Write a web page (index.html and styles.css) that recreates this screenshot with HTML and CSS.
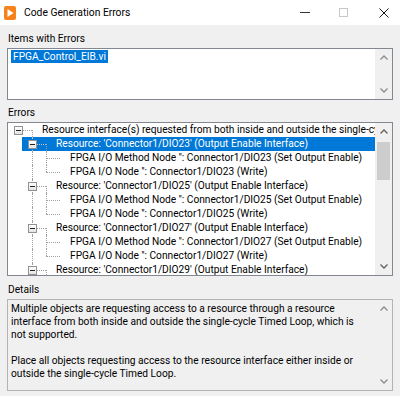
FILE: index.html
```html
<!DOCTYPE html>
<html>
  <head>
    <title>Code Generation Errors</title>
    <meta charset="UTF-8">
    <link rel="stylesheet" href="styles.css">
  </head>
  <body>
    <div class="window">
      <div class="titlebar">
        <svg class="app-icon" width="12" height="14" viewBox="0 0 12 14">
          <rect x="0" y="0" width="12" height="14" rx="2" fill="#f7821b"/>
          <path d="M3.5 3 L9.5 7 L3.5 11 Z" fill="#fff"/>
        </svg>
        <span class="title">Code Generation Errors</span>
        <div class="controls">
          <span class="ctl ctl-min"><i></i></span>
          <span class="ctl ctl-max"><i></i></span>
          <span class="ctl ctl-close">
            <svg width="10" height="10" viewBox="0 0 10 10"><path d="M0.5 0.5 L9.5 9.5 M9.5 0.5 L0.5 9.5" stroke="#1a1a1a" stroke-width="1"/></svg>
          </span>
        </div>
      </div>

      <div class="content">
        <div class="label label-first">Items with Errors</div>
        <div class="box list-box">
          <div class="list-items">
            <span class="item selected">FPGA_Control_EIB.vi</span>
          </div>
          <div class="scrollbar light">
            <span class="arrow"><svg width="8" height="5" viewBox="0 0 8 5"><path d="M0.5 4.5 L4 1 L7.5 4.5" /></svg></span>
            <span class="track"></span>
            <span class="arrow"><svg width="8" height="5" viewBox="0 0 8 5"><path d="M0.5 0.5 L4 4 L7.5 0.5" /></svg></span>
          </div>
        </div>

        <div class="label">Errors</div>
        <div class="box tree-box">
          <div class="tree">
            <div class="row">
              <div class="body">
                <span class="node root"><i class="exp"></i><b class="drop"></b></span>
                <span class="text">Resource interface(s) requested from both inside and outside the single-cycle Timed Loop</span>
              </div>
            </div>
            <div class="row">
              <span class="guide"></span>
              <div class="body selected">
                <span class="node mid"><i class="exp"></i><b class="drop"></b></span>
                <span class="text">Resource: 'Connector1/DIO23' (Output Enable Interface)</span>
              </div>
            </div>
            <div class="row">
              <span class="guide"></span><span class="guide line"></span>
              <div class="body">
                <span class="node mid"></span>
                <span class="text">FPGA I/O Method Node '': Connector1/DIO23 (Set Output Enable)</span>
              </div>
            </div>
            <div class="row">
              <span class="guide"></span><span class="guide line"></span>
              <div class="body">
                <span class="node last"></span>
                <span class="text">FPGA I/O Node '': Connector1/DIO23 (Write)</span>
              </div>
            </div>
            <div class="row">
              <span class="guide"></span>
              <div class="body">
                <span class="node mid"><i class="exp"></i><b class="drop"></b></span>
                <span class="text">Resource: 'Connector1/DIO25' (Output Enable Interface)</span>
              </div>
            </div>
            <div class="row">
              <span class="guide"></span><span class="guide line"></span>
              <div class="body">
                <span class="node mid"></span>
                <span class="text">FPGA I/O Method Node '': Connector1/DIO25 (Set Output Enable)</span>
              </div>
            </div>
            <div class="row">
              <span class="guide"></span><span class="guide line"></span>
              <div class="body">
                <span class="node last"></span>
                <span class="text">FPGA I/O Node '': Connector1/DIO25 (Write)</span>
              </div>
            </div>
            <div class="row">
              <span class="guide"></span>
              <div class="body">
                <span class="node mid"><i class="exp"></i><b class="drop"></b></span>
                <span class="text">Resource: 'Connector1/DIO27' (Output Enable Interface)</span>
              </div>
            </div>
            <div class="row">
              <span class="guide"></span><span class="guide line"></span>
              <div class="body">
                <span class="node mid"></span>
                <span class="text">FPGA I/O Method Node '': Connector1/DIO27 (Set Output Enable)</span>
              </div>
            </div>
            <div class="row">
              <span class="guide"></span><span class="guide line"></span>
              <div class="body">
                <span class="node last"></span>
                <span class="text">FPGA I/O Node '': Connector1/DIO27 (Write)</span>
              </div>
            </div>
            <div class="row">
              <span class="guide"></span>
              <div class="body">
                <span class="node mid"><i class="exp"></i><b class="drop"></b></span>
                <span class="text">Resource: 'Connector1/DIO29' (Output Enable Interface)</span>
              </div>
            </div>
          </div>
          <div class="scrollbar">
            <span class="arrow"><svg width="8" height="5" viewBox="0 0 8 5"><path d="M0.5 4.5 L4 1 L7.5 4.5" /></svg></span>
            <span class="track"><span class="thumb"></span></span>
            <span class="arrow"><svg width="8" height="5" viewBox="0 0 8 5"><path d="M0.5 0.5 L4 4 L7.5 0.5" /></svg></span>
          </div>
        </div>

        <div class="label label-details">Details</div>
        <div class="box details-box">
          <div class="details-text">
            <p>Multiple objects are requesting access to a resource through a resource interface from both inside and outside the single-cycle Timed Loop, which is not supported.</p>
            <p>Place all objects requesting access to the resource interface either inside or outside the single-cycle Timed Loop.</p>
          </div>
          <div class="scrollbar light">
            <span class="arrow"><svg width="8" height="5" viewBox="0 0 8 5"><path d="M0.5 4.5 L4 1 L7.5 4.5" /></svg></span>
            <span class="track"></span>
            <span class="arrow"><svg width="8" height="5" viewBox="0 0 8 5"><path d="M0.5 0.5 L4 4 L7.5 0.5" /></svg></span>
          </div>
        </div>
      </div>
    </div>
  </body>
</html>
```

FILE: styles.css
```css
body {
    margin: 0;
    background: #f0f0f0;
    font-family: Roboto, "Noto Sans", sans-serif;
    font-size: 10.2px;
    color: #000;
}

.window {
    width: 400px;
    height: 396px;
    overflow: hidden;
}

/* title bar */
.titlebar {
    height: 25px;
    background: #fff;
    display: flex;
    align-items: center;
}

.app-icon {
    margin-left: 4px;
    flex: none;
}

.title {
    margin-left: 8px;
    font-size: 10.3px;
    line-height: 14px;
}

.controls {
    margin-left: auto;
    display: flex;
    height: 25px;
}

.ctl {
    width: 39px;
    display: flex;
    align-items: center;
    justify-content: center;
}

.ctl-min i {
    display: block;
    width: 10px;
    height: 1px;
    background: #333;
}

.ctl-max i {
    display: block;
    width: 9px;
    height: 9px;
    box-sizing: border-box;
    border: 1px solid #c8c8c8;
}

.ctl-close {
    width: 37px;
    padding-left: 4px;
    box-sizing: border-box;
}

/* dialog body */
.content {
    padding: 0 7px;
}

.label {
    height: 14px;
    line-height: 14px;
    margin: 6px 0 2px 1px;
}

.label-first {
    margin-top: 7px;
}

.label-details {
    margin-top: 7px;
}

.box {
    border: 1px solid #828790;
    display: flex;
    overflow: hidden;
}

.list-box {
    height: 52px;
    box-sizing: border-box;
    background: #fff;
}

.tree-box {
    height: 154px;
    box-sizing: border-box;
    background: #fff;
}

.details-box {
    height: 92px;
    box-sizing: border-box;
    background: #f0f0f0;
    border-color: #b4b4b4;
}

.list-items {
    flex: 1;
    padding: 1px 0 0 3px;
}

.item {
    display: inline-block;
    height: 13px;
    line-height: 13px;
    padding: 0 2px;
}

.item.selected {
    background: #0078d7;
    color: #fff;
}

/* scrollbars */
.scrollbar {
    width: 17px;
    flex: none;
    display: flex;
    flex-direction: column;
    background: #f0f0f0;
}

.arrow {
    height: 17px;
    display: flex;
    align-items: center;
    justify-content: center;
    flex: none;
}

.arrow path {
    fill: none;
    stroke: #606060;
    stroke-width: 1.3;
}

.scrollbar.light .arrow path {
    stroke: #8a8a8a;
}

.track {
    flex: 1;
    padding-top: 2px;
}

.thumb {
    display: block;
    margin: 0 2px 0 2px;
    height: 38px;
    background: #cdcdcd;
}

/* tree view */
.tree {
    flex: 1;
    overflow: hidden;
}

.row {
    display: flex;
    height: 14px;
    padding-left: 3px;
    white-space: nowrap;
}

.guide {
    width: 14px;
    flex: none;
    position: relative;
}

.guide.line::before {
    content: "";
    position: absolute;
    left: 7px;
    top: 0;
    bottom: 0;
    border-left: 1px dotted #a0a0a0;
}

.body {
    flex: 1;
    display: flex;
    align-items: center;
    margin-left: -3px;
    padding-left: 3px;
}

.body.selected {
    background: #0078d7;
    color: #fff;
}

.node {
    width: 21px;
    height: 14px;
    flex: none;
    position: relative;
}

.node::before {
    content: "";
    position: absolute;
    left: 7px;
    right: 0;
    top: 7px;
    border-top: 1px dotted #a0a0a0;
}

.node.mid::after,
.node.last::after {
    content: "";
    position: absolute;
    left: 7px;
    top: 0;
    bottom: 0;
    border-left: 1px dotted #a0a0a0;
}

.node.last::after {
    bottom: 7px;
}

.body.selected .node::before,
.body.selected .node::after {
    border-color: #c0c0c0;
}

.drop {
    position: absolute;
    left: 21px;
    top: 7px;
    bottom: 0;
    border-left: 1px dotted #a0a0a0;
}

.exp {
    position: absolute;
    left: 3px;
    top: 3px;
    width: 9px;
    height: 9px;
    box-sizing: border-box;
    border: 1px solid #919191;
    background: linear-gradient(#ffffff, #e4e4e4);
    z-index: 1;
}

.exp::before {
    content: "";
    position: absolute;
    left: 1px;
    top: 3px;
    width: 5px;
    height: 1px;
    background: #222;
}

.text {
    margin-left: 10px;
    line-height: 14px;
}

/* details */
.details-text {
    flex: 1;
    padding: 2px 10px 0 3px;
    line-height: 13px;
}

.details-text p {
    margin: 0 0 13px 0;
}
```
